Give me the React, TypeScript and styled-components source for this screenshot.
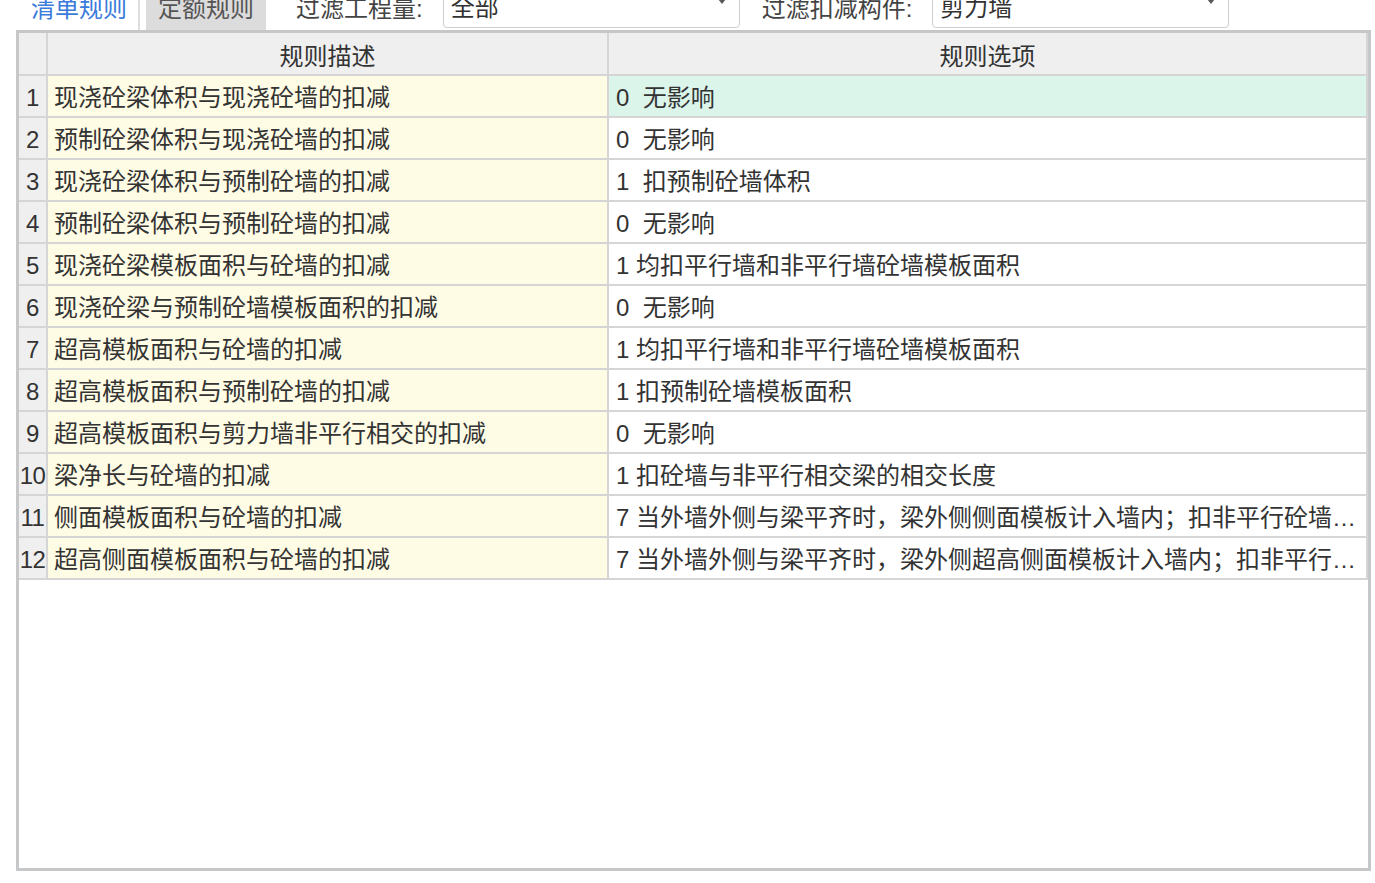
import React from "react";
import styled, { createGlobalStyle } from "styled-components";

const GlobalStyle = createGlobalStyle`
  html, body {
    margin: 0;
    padding: 0;
    background: #ffffff;
    overflow: hidden;
  }
  body {
    font-family: "Liberation Sans", "Noto Sans CJK SC", sans-serif;
    font-size: 24px;
    color: #333333;
  }
`;

const Page = styled.div`
  margin-top: -12px;
  padding-left: 16px;
  width: 1355px;
`;

const Toolbar = styled.div`
  display: flex;
  align-items: stretch;
  height: 42px;
`;

const Tabs = styled.div`
  display: flex;
  gap: 6px;
  margin-right: 30px;
`;

const Tab = styled.div<{ $active?: boolean }>`
  display: flex;
  align-items: center;
  padding: ${(p) => (p.$active ? "0 11px 6px 15px" : "0 12px 6px 12px")};
  background: ${(p) => (p.$active ? "#ffffff" : "#dcdcdc")};
  color: ${(p) => (p.$active ? "#3a7bdb" : "#555555")};
  border-right: ${(p) => (p.$active ? "2px solid #dedede" : "none")};
  white-space: nowrap;
`;

const FilterLabel = styled.div`
  display: flex;
  align-items: center;
  color: #444444;
  margin-right: 20px;
  padding-bottom: 6px;
  white-space: nowrap;
`;

const Select = styled.div<{ $gapAfter?: number }>`
  display: flex;
  align-items: center;
  justify-content: space-between;
  box-sizing: border-box;
  width: 297px;
  height: 40px;
  margin-right: ${(p) => p.$gapAfter ?? 0}px;
  padding: 0 13px 5px 7px;
  background: #ffffff;
  border: 1px solid #cfcfcf;
  border-radius: 4px;
  color: #333333;
`;

const Caret = styled.span`
  width: 0;
  height: 0;
  border-left: 4px solid transparent;
  border-right: 4px solid transparent;
  border-top: 5px solid #5a5a5a;
  margin-bottom: 8px;
`;

const Grid = styled.div`
  box-sizing: border-box;
  height: 841px;
  border: 3px solid #c6c7c9;
  background: #ffffff;
`;

const Row = styled.div`
  display: grid;
  grid-template-columns: 29px 561px 759px;
  height: 42px;
`;

const HeaderRow = styled(Row)`
  height: 43px;
`;

const Cell = styled.div<{ $bg?: string; $pad?: number }>`
  box-sizing: border-box;
  border-right: 2px solid #d5d5d5;
  border-bottom: 2px solid #d5d5d5;
  background: ${(p) => p.$bg ?? "#ffffff"};
  text-align: left;
  padding-top: 2px;
  padding-left: ${(p) => p.$pad ?? 0}px;
  line-height: 40px;
  white-space: pre;
  overflow: hidden;
  text-overflow: ellipsis;
  color: #333333;
`;

const HeaderCell = styled(Cell)`
  padding-top: 3px;
  line-height: 41px;
  background: #efefef;
  text-align: center;
`;

const NumCell = styled(Cell)`
  background: #efefef;
  text-align: center;
  letter-spacing: -0.5px;
`;

const OptionCell = styled(Cell)`
  padding-right: 0;
`;

type Rule = { desc: string; option: string; selected?: boolean };

const rules: Rule[] = [
  { desc: "现浇砼梁体积与现浇砼墙的扣减", option: "0  无影响", selected: true },
  { desc: "预制砼梁体积与现浇砼墙的扣减", option: "0  无影响" },
  { desc: "现浇砼梁体积与预制砼墙的扣减", option: "1  扣预制砼墙体积" },
  { desc: "预制砼梁体积与预制砼墙的扣减", option: "0  无影响" },
  { desc: "现浇砼梁模板面积与砼墙的扣减", option: "1 均扣平行墙和非平行墙砼墙模板面积" },
  { desc: "现浇砼梁与预制砼墙模板面积的扣减", option: "0  无影响" },
  { desc: "超高模板面积与砼墙的扣减", option: "1 均扣平行墙和非平行墙砼墙模板面积" },
  { desc: "超高模板面积与预制砼墙的扣减", option: "1 扣预制砼墙模板面积" },
  { desc: "超高模板面积与剪力墙非平行相交的扣减", option: "0  无影响" },
  { desc: "梁净长与砼墙的扣减", option: "1 扣砼墙与非平行相交梁的相交长度" },
  {
    desc: "侧面模板面积与砼墙的扣减",
    option: "7 当外墙外侧与梁平齐时，梁外侧侧面模板计入墙内；扣非平行砼墙与梁相交部分面积",
  },
  {
    desc: "超高侧面模板面积与砼墙的扣减",
    option: "7 当外墙外侧与梁平齐时，梁外侧超高侧面模板计入墙内；扣非平行砼墙与梁相交部分面积",
  },
];

export default function App() {
  return (
    <>
      <GlobalStyle />
      <Page>
        <Toolbar>
          <Tabs>
            <Tab $active>清单规则</Tab>
            <Tab>定额规则</Tab>
          </Tabs>
          <FilterLabel>过滤工程量:</FilterLabel>
          <Select $gapAfter={22}>
            <span>全部</span>
            <Caret />
          </Select>
          <FilterLabel>过滤扣减构件:</FilterLabel>
          <Select>
            <span>剪力墙</span>
            <Caret />
          </Select>
        </Toolbar>
        <Grid>
          <HeaderRow>
            <HeaderCell />
            <HeaderCell>规则描述</HeaderCell>
            <HeaderCell>规则选项</HeaderCell>
          </HeaderRow>
          {rules.map((r, i) => (
            <Row key={i}>
              <NumCell>{i + 1}</NumCell>
              <Cell $bg="#fffce6" $pad={6}>
                {r.desc}
              </Cell>
              <OptionCell $bg={r.selected ? "#dcf5eb" : "#ffffff"} $pad={7}>
                {r.option}
              </OptionCell>
            </Row>
          ))}
        </Grid>
      </Page>
    </>
  );
}
